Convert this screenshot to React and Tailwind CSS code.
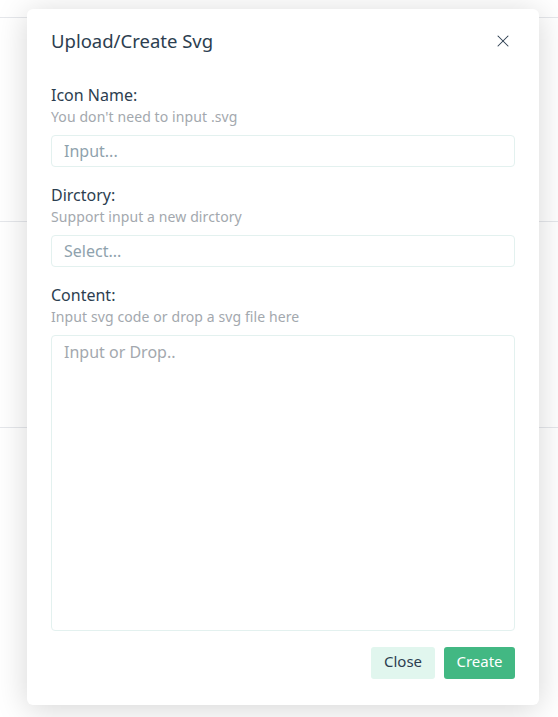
import { X } from "lucide-react";

function Field({ label, hint, children }) {
  return (
    <div className="flex flex-col">
      <label className="text-[16px] leading-[22px] text-[#2c3e50]">{label}</label>
      <p className="text-[14px] leading-[22px] tracking-[0.1px] text-[#a3a8ae]">{hint}</p>
      <div className="mt-[7px]">{children}</div>
    </div>
  );
}

export default function App() {
  return (
    <div
      className="relative h-[717px] w-full overflow-hidden bg-white"
      style={{ fontFamily: '"Noto Sans", "Open Sans", sans-serif' }}
    >
      {/* page behind the dialog */}
      <div className="h-[18px] border-b border-gray-200" />
      <div className="h-[204px] border-b border-gray-200" />
      <div className="h-[206px] border-b border-gray-200" />

      {/* dialog */}
      <div className="absolute left-[27px] top-[9px] flex h-[696px] w-[512px] flex-col rounded-md bg-white px-6 shadow-[0_4px_32px_rgba(0,0,0,0.17)]">
        <div className="flex h-[64px] items-center justify-between">
          <h2 className="text-[18.5px] text-[#2c3e50]">Upload/Create Svg</h2>
          <button type="button" className="mr-[2px] text-[#2c3e50]">
            <X size={20} strokeWidth={1.25} />
          </button>
        </div>

        <div className="mt-[11px] flex flex-col gap-[17px]">
          <Field label="Icon Name:" hint="You don't need to input .svg">
            <input
              placeholder="Input..."
              className="h-[32px] w-full rounded-[4px] border border-[#e3f1ef] px-3 text-[16px] text-[#2c3e50] outline-none placeholder:text-[#8fa2ad]"
            />
          </Field>
          <Field label="Dirctory:" hint="Support input a new dirctory">
            <input
              placeholder="Select..."
              className="h-[32px] w-full rounded-[4px] border border-[#e3f1ef] px-3 text-[16px] text-[#2c3e50] outline-none placeholder:text-[#8fa2ad]"
            />
          </Field>
          <Field label="Content:" hint="Input svg code or drop a svg file here">
            <textarea
              placeholder="Input or Drop.."
              className="block h-[296px] w-full resize-none rounded-[4px] border border-[#e3f1ef] px-3 py-[4px] text-[16px] leading-[24px] text-[#2c3e50] outline-none placeholder:text-[#a3a8ae]"
            />
          </Field>
        </div>

        <div className="mt-[16px] flex justify-end gap-[9px]">
          <button
            type="button"
            className="h-[32px] w-[64px] rounded-[3px] bg-[#e1f6ee] pb-[3px] text-[15px] text-[#2c3e50]"
          >
            Close
          </button>
          <button
            type="button"
            className="h-[32px] w-[71px] rounded-[3px] bg-[#42b883] pb-[3px] text-[15px] text-white"
          >
            Create
          </button>
        </div>
      </div>
    </div>
  );
}
